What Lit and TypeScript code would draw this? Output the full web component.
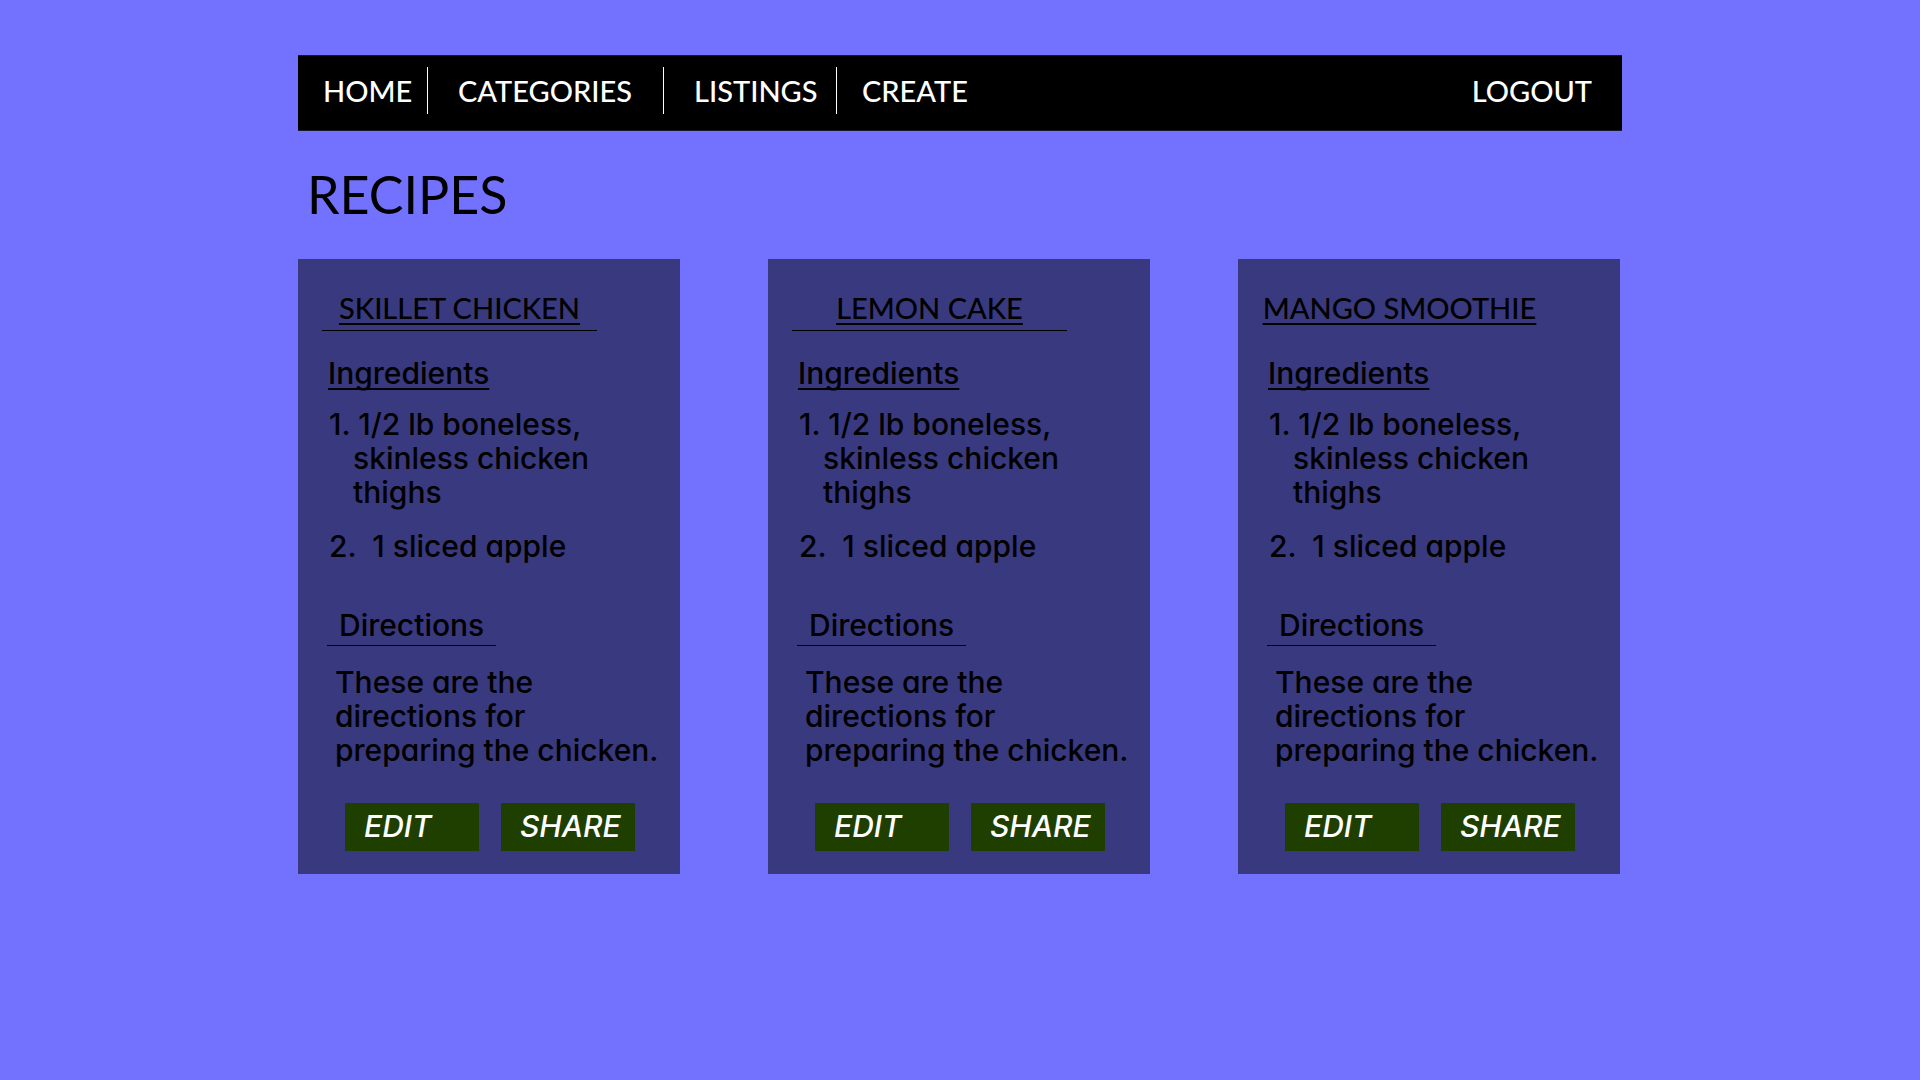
import { LitElement, html, css } from "lit";
import { customElement, property } from "lit/decorators.js";

interface Recipe {
  title: string;
  ruled: boolean;
  ingredients: string[];
  directions: string;
}

const INGREDIENTS = [
  "1. 1/2 lb boneless,\nskinless chicken\nthighs",
  "2. \u00a01 sliced apple",
];
const DIRECTIONS = "These are the\ndirections for\npreparing the chicken.";

const RECIPES: Recipe[] = [
  { title: "SKILLET CHICKEN", ruled: true, ingredients: INGREDIENTS, directions: DIRECTIONS },
  { title: "LEMON CAKE", ruled: true, ingredients: INGREDIENTS, directions: DIRECTIONS },
  { title: "MANGO SMOOTHIE", ruled: false, ingredients: INGREDIENTS, directions: DIRECTIONS },
];

@customElement("recipe-card")
export class RecipeCard extends LitElement {
  @property({ attribute: false }) recipe!: Recipe;

  static styles = css`
    :host {
      display: block;
      box-sizing: border-box;
      padding: 32px 0 23px 24px;
      background: #39397f;
      color: #000;
      font: 500 30px/34px Inter, "Liberation Sans", sans-serif;
      font-feature-settings: "cv11";
    }
    h2, h3, ol, p {
      margin: 0;
      padding: 0;
      font-size: inherit;
      font-weight: inherit;
    }
    .title {
      max-width: 275px;
      padding-bottom: 5px;
      border-bottom: 1px solid transparent;
      font-family: Lato, "Liberation Sans", sans-serif;
      font-size: 29px;
      text-align: center;
      white-space: nowrap;
    }
    .ruled {
      border-bottom-color: #000;
    }
    .underlined {
      text-decoration: underline 2px;
      text-underline-offset: 4px;
      text-decoration-skip-ink: none;
    }
    .ingredients-heading {
      margin: 25px 0 0 6px;
    }
    .ingredients {
      display: flex;
      flex-direction: column;
      gap: 20px;
      margin: 17px 0 0 31px;
      list-style: none;
    }
    .ingredient-line {
      display: block;
    }
    .ingredient-line:first-child {
      text-indent: -24px;
    }
    .directions-heading {
      box-sizing: border-box;
      width: 169px;
      margin: 45px 0 0 5px;
      padding: 0 0 3px 12px;
      border-bottom: 1px solid #000;
    }
    .directions {
      margin: 19px 0 0 13px;
      white-space: pre-line;
    }
    .actions {
      display: flex;
      gap: 22px;
      margin: 36px 0 0 23px;
    }
    .action {
      width: 134px;
      height: 48px;
      padding: 0 0 2px 19px;
      border: 0;
      background: #1f3f00;
      color: #fff;
      font: inherit;
      font-style: italic;
      text-align: left;
      cursor: pointer;
    }
  `;

  render() {
    const r = this.recipe;
    return html`
      <h2 class="title ${r.ruled ? "ruled" : ""}"><span class="underlined">${r.title}</span></h2>
      <h3 class="ingredients-heading"><span class="underlined">Ingredients</span></h3>
      <ol class="ingredients">
        ${r.ingredients.map(
          (item) => html`<li>${item.split("\n").map(
            (line) => html`<span class="ingredient-line">${line}</span>`,
          )}</li>`,
        )}
      </ol>
      <h3 class="directions-heading">Directions</h3>
      <p class="directions">${r.directions}</p>
      <div class="actions">
        <button class="action" type="button">EDIT</button>
        <button class="action" type="button">SHARE</button>
      </div>
    `;
  }
}

@customElement("app-root")
export class AppRoot extends LitElement {
  static styles = css`
    :host {
      display: block;
      box-sizing: border-box;
      min-height: 100vh;
      padding: 55px 24px;
      background: #7272ff;
      color: #000;
      font: 500 29px/34px Lato, "Liberation Sans", sans-serif;
    }
    .page {
      max-width: 1324px;
      margin: 0 auto;
    }
    .bar {
      display: flex;
      justify-content: space-between;
      padding: 11px 30px 16px 0;
      border: solid #17172f;
      border-width: 1px 0;
      background: #000;
    }
    .menu {
      display: grid;
      grid-template-columns: 130px 236px 173px auto;
    }
    .link {
      padding-left: 30px;
      border-right: 1px solid #fff;
      color: #fff;
      line-height: 47px;
      text-decoration: none;
    }
    .link:first-child,
    .link:last-child {
      padding-left: 25px;
    }
    .link:last-child {
      border-right: 0;
    }
    .heading {
      margin: 32px 0 0 9px;
      font-size: 52px;
      font-weight: 400;
      line-height: 62px;
    }
    .cards {
      display: grid;
      grid-template-columns: repeat(3, minmax(0, 1fr));
      gap: 88px;
      margin-top: 34px;
      padding-right: 2px;
    }
  `;

  render() {
    return html`
      <div class="page">
        <header class="bar">
          <nav class="menu" aria-label="Main">
            <a class="link" href="#home">HOME</a>
            <a class="link" href="#categories">CATEGORIES</a>
            <a class="link" href="#listings">LISTINGS</a>
            <a class="link" href="#create">CREATE</a>
          </nav>
          <a class="link" href="#logout">LOGOUT</a>
        </header>
        <main>
          <h1 class="heading">RECIPES</h1>
          <section class="cards">
            ${RECIPES.map((recipe) => html`<recipe-card .recipe=${recipe}></recipe-card>`)}
          </section>
        </main>
      </div>
    `;
  }
}
